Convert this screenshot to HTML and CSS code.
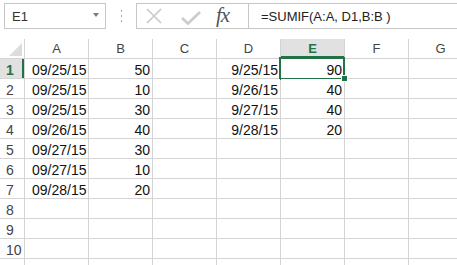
FILE: index.html
```html
<!DOCTYPE html>
<html lang="en">
  <head>
    <meta charset="UTF-8" />
    <meta name="viewport" content="width=device-width, initial-scale=1.0" />
    <title>SUMIF</title>
    <link rel="stylesheet" href="styles.css">
  </head>
  <body>
    <div class="topbar">
      <div class="namebox">
        <span>E1</span>
        <span class="caret"></span>
      </div>
      <div class="grip"><i></i><i></i><i></i></div>
      <div class="fbar">
        <div class="fbtns">
          <svg class="ic-x" width="16" height="16" viewBox="0 0 16 16">
            <path d="M1 1 L15 15 M15 1 L1 15" stroke="#c9c9c9" stroke-width="1.6" fill="none" />
          </svg>
          <svg class="ic-ok" width="20" height="14" viewBox="0 0 20 14">
            <path d="M1 7 L7 12.5 L19 1" stroke="#cdcdcd" stroke-width="2.8" fill="none" />
          </svg>
          <span class="fx">fx</span>
        </div>
        <div class="formula">=SUMIF(A:A, D1,B:B )</div>
      </div>
    </div>

    <div class="sheet">
      <!-- header row -->
      <div class="corner"></div>
      <div class="colhd">A</div>
      <div class="colhd">B</div>
      <div class="colhd">C</div>
      <div class="colhd">D</div>
      <div class="colhd sel">E</div>
      <div class="colhd">F</div>
      <div class="colhd">G</div>

      <div class="rowhd sel">1</div>
      <div class="cell">09/25/15</div>
      <div class="cell num">50</div>
      <div class="cell"></div>
      <div class="cell num">9/25/15</div>
      <div class="cell num active">90<span class="handle"></span></div>
      <div class="cell"></div>
      <div class="cell"></div>

      <div class="rowhd">2</div>
      <div class="cell">09/25/15</div>
      <div class="cell num">10</div>
      <div class="cell"></div>
      <div class="cell num">9/26/15</div>
      <div class="cell num">40</div>
      <div class="cell"></div>
      <div class="cell"></div>

      <div class="rowhd">3</div>
      <div class="cell">09/25/15</div>
      <div class="cell num">30</div>
      <div class="cell"></div>
      <div class="cell num">9/27/15</div>
      <div class="cell num">40</div>
      <div class="cell"></div>
      <div class="cell"></div>

      <div class="rowhd">4</div>
      <div class="cell">09/26/15</div>
      <div class="cell num">40</div>
      <div class="cell"></div>
      <div class="cell num">9/28/15</div>
      <div class="cell num">20</div>
      <div class="cell"></div>
      <div class="cell"></div>

      <div class="rowhd">5</div>
      <div class="cell">09/27/15</div>
      <div class="cell num">30</div>
      <div class="cell"></div>
      <div class="cell"></div>
      <div class="cell"></div>
      <div class="cell"></div>
      <div class="cell"></div>

      <div class="rowhd">6</div>
      <div class="cell">09/27/15</div>
      <div class="cell num">10</div>
      <div class="cell"></div>
      <div class="cell"></div>
      <div class="cell"></div>
      <div class="cell"></div>
      <div class="cell"></div>

      <div class="rowhd">7</div>
      <div class="cell">09/28/15</div>
      <div class="cell num">20</div>
      <div class="cell"></div>
      <div class="cell"></div>
      <div class="cell"></div>
      <div class="cell"></div>
      <div class="cell"></div>

      <div class="rowhd">8</div>
      <div class="cell"></div>
      <div class="cell"></div>
      <div class="cell"></div>
      <div class="cell"></div>
      <div class="cell"></div>
      <div class="cell"></div>
      <div class="cell"></div>

      <div class="rowhd">9</div>
      <div class="cell"></div>
      <div class="cell"></div>
      <div class="cell"></div>
      <div class="cell"></div>
      <div class="cell"></div>
      <div class="cell"></div>
      <div class="cell"></div>

      <div class="rowhd">10</div>
      <div class="cell"></div>
      <div class="cell"></div>
      <div class="cell"></div>
      <div class="cell"></div>
      <div class="cell"></div>
      <div class="cell"></div>
      <div class="cell"></div>

      <!-- row 11, only its top edge is in view -->
      <div class="rowhd"></div>
      <div class="cell"></div>
      <div class="cell"></div>
      <div class="cell"></div>
      <div class="cell"></div>
      <div class="cell"></div>
      <div class="cell"></div>
      <div class="cell"></div>
    </div>
  </body>
</html>
```

FILE: styles.css
```css
html,
body {
  height: 100%;
  padding: 0;
  margin: 0;
  overflow: hidden;
  background: #fff;
  font-family: "Liberation Sans", Arial, sans-serif;
}

.topbar {
  display: flex;
  align-items: stretch;
  padding-top: 3px;
  height: 26px;
}

.namebox {
  box-sizing: border-box;
  width: 102px;
  margin-left: 4px;
  border: 1px solid #c6c6c6;
  display: flex;
  align-items: center;
  justify-content: space-between;
  padding: 0 6px 0 7px;
  font-size: 13px;
  color: #333;
}

.caret {
  width: 0;
  height: 0;
  border-left: 3px solid transparent;
  border-right: 3px solid transparent;
  border-top: 4px solid #7a7a7a;
  margin-bottom: 2px;
}

.grip {
  width: 30px;
  display: flex;
  flex-direction: column;
  align-items: center;
  justify-content: center;
  gap: 3px;
}

.grip i {
  display: block;
  width: 1px;
  height: 2px;
  background: #a8a8a8;
}

.fbar {
  flex: 1;
  display: flex;
  border: 1px solid #c6c6c6;
  border-right: none;
}

.fbtns {
  box-sizing: border-box;
  width: 112px;
  display: flex;
  align-items: center;
  padding-left: 9px;
  border-right: 1px solid #c6c6c6;
}

.ic-ok {
  margin-left: 19px;
  margin-top: 4px;
}

.fx {
  margin-left: 15px;
  font-family: "Liberation Serif", serif;
  font-style: italic;
  font-size: 21px;
  color: #555;
  letter-spacing: -1px;
  margin-top: -1px;
}

.formula {
  display: flex;
  align-items: center;
  padding-left: 12px;
  font-size: 13px;
  color: #222;
}

.sheet {
  margin-top: 10px;
  display: grid;
  grid-template-columns: 24px repeat(7, 63px);
  grid-auto-rows: 19px;
  grid-template-rows: 19px;
  gap: 1px;
  background: #d4d4d4;
  width: max-content;
}

.sheet > div {
  background: #fff;
  position: relative;
}

.corner::after {
  content: "";
  position: absolute;
  right: 2px;
  bottom: 2px;
  width: 13px;
  height: 13px;
  background: #dcdcdc;
  clip-path: polygon(100% 0, 100% 100%, 0 100%);
}

.colhd {
  text-align: center;
  font-size: 13px;
  line-height: 19px;
  color: #444;
}

.colhd.sel {
  background: #e1e1e1;
  color: #217346;
  font-weight: bold;
  box-shadow: inset 0 -2px 0 #217346;
}

.rowhd {
  box-sizing: border-box;
  padding: 2px 0 0 6px;
  font-size: 14px;
  line-height: 18px;
  color: #444;
}

.rowhd.sel {
  background: #e1e1e1;
  color: #217346;
  font-weight: bold;
  box-shadow: inset -2px 0 0 #217346;
}

.cell {
  box-sizing: border-box;
  padding: 2px 2px 0 7px;
  font-size: 14px;
  line-height: 18px;
  color: #111;
  white-space: nowrap;
}

.cell.num {
  text-align: right;
  padding-left: 2px;
}

.cell.active::before {
  content: "";
  position: absolute;
  left: -2px;
  top: -2px;
  right: -1px;
  bottom: -2px;
  border: 2px solid #217346;
}

.handle {
  position: absolute;
  right: -4px;
  bottom: -4px;
  width: 5px;
  height: 5px;
  background: #217346;
  border: 1px solid #fff;
  z-index: 1;
}
```
